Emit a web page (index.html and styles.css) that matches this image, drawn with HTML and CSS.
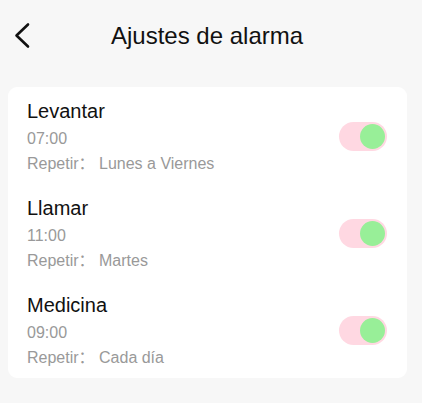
FILE: index.html
```html
<!DOCTYPE html>
<html lang="es">
<head>
    <meta charset="UTF-8">
    <meta name="viewport" content="width=device-width, initial-scale=1.0">
    <title>Ajustes de alarma</title>
    <link rel="stylesheet" href="styles.css">
</head>
<body>
    <header class="top-bar">
        <span class="back">
            <svg width="18" height="28" viewBox="0 0 18 28">
                <polyline points="14,2.5 2.5,13.5 14,24.5" fill="none" stroke="#111" stroke-width="2.6" stroke-linecap="round" stroke-linejoin="round"/>
            </svg>
        </span>
        <h1 class="title">Ajustes de alarma</h1>
    </header>

    <div class="card">
        <div class="alarm">
            <div class="info">
                <div class="name">Levantar</div>
                <div class="time">07:00</div>
                <div class="repeat">Repetir： Lunes a Viernes</div>
            </div>
            <span class="switch on"><span class="knob"></span></span>
        </div>
        <div class="alarm">
            <div class="info">
                <div class="name">Llamar</div>
                <div class="time">11:00</div>
                <div class="repeat">Repetir： Martes</div>
            </div>
            <span class="switch on"><span class="knob"></span></span>
        </div>
        <div class="alarm">
            <div class="info">
                <div class="name">Medicina</div>
                <div class="time">09:00</div>
                <div class="repeat">Repetir： Cada día</div>
            </div>
            <span class="switch on"><span class="knob"></span></span>
        </div>
    </div>
</body>
</html>
```

FILE: styles.css
```css
body {
    margin: 0;
    font-family: "Liberation Sans", Arial, "Noto Sans CJK SC", sans-serif;
    background-color: #f7f7f7;
    color: #111;
}
.top-bar {
    height: 72px;
    display: flex;
    align-items: center;
    padding-left: 14px;
}
.back {
    display: flex;
    width: 18px;
    height: 28px;
}
.title {
    margin: 0 0 0 79px;
    font-size: 24px;
    font-weight: normal;
    line-height: 28px;
}
.card {
    margin: 15px 15px 0 8px;
    background-color: #fff;
    border-radius: 9px;
}
.alarm {
    display: flex;
    align-items: center;
    justify-content: space-between;
    padding: 10px 20px 8px 19px;
}
.name {
    font-size: 20px;
    line-height: 28px;
}
.time {
    margin-top: 1px;
    font-size: 16px;
    line-height: 26px;
    color: #999;
}
.repeat {
    font-size: 16px;
    line-height: 24px;
    color: #999;
}
.switch {
    position: relative;
    width: 48px;
    height: 29px;
    border-radius: 15px;
    background-color: #ffd8e2;
}
.knob {
    position: absolute;
    top: 2px;
    right: 2px;
    width: 25px;
    height: 25px;
    border-radius: 50%;
    background-color: #98ef98;
}
```
